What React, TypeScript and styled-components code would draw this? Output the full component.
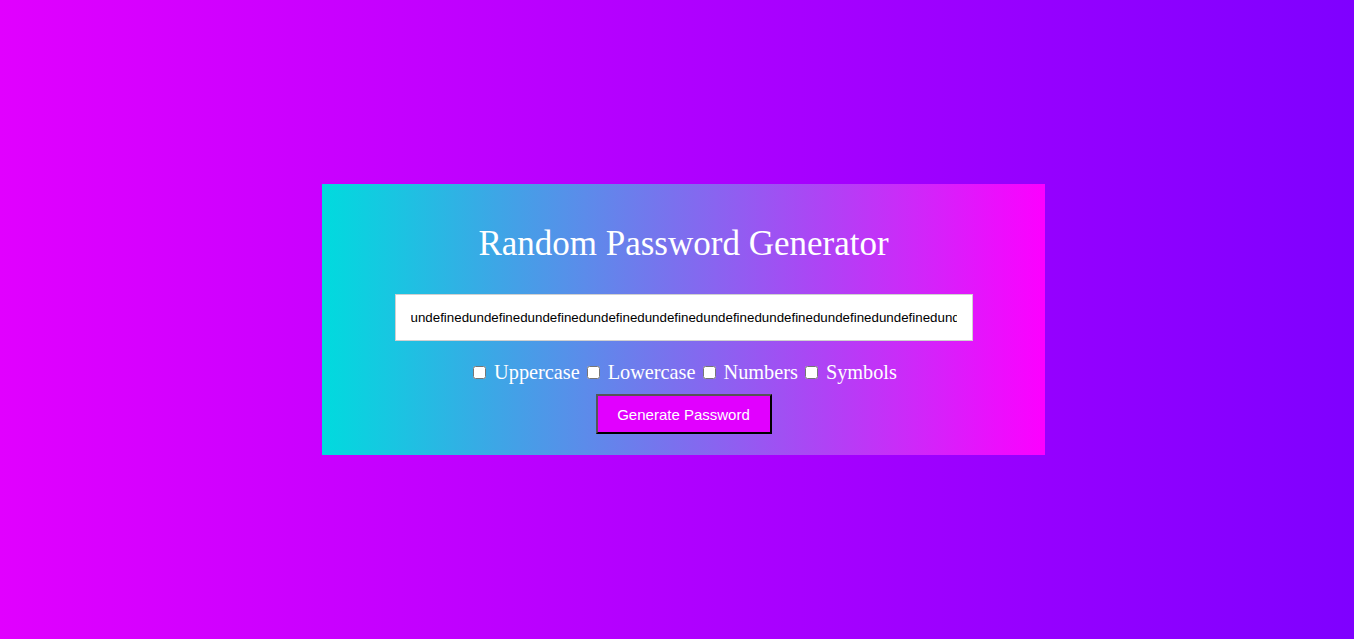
import React from "react";
import styled, { createGlobalStyle } from "styled-components";

const Global = createGlobalStyle`
  html, body { margin: 0; padding: 0; }
  body {
    font-family: "Liberation Serif", "Times New Roman", serif;
    background: linear-gradient(to right, #e100ff, #7f00ff);
    min-height: 100vh;
  }
`;

const Page = styled.div`
  min-height: 100vh;
  display: flex;
  align-items: center;
  justify-content: center;
  padding-left: 13px;
  box-sizing: border-box;
`;

const Card = styled.div`
  width: 723px;
  height: 271px;
  box-sizing: border-box;
  background: linear-gradient(to right, #00dbde, #fc00ff);
  display: flex;
  flex-direction: column;
  align-items: center;
  padding-top: 38px;
`;

const Title = styled.h1`
  margin: 0 0 28px 0;
  font-family: "Liberation Serif", "Times New Roman", serif;
  font-weight: normal;
  font-size: 35px;
  line-height: 44px;
  color: #fff;
`;

const PasswordInput = styled.input`
  width: 578px;
  height: 47px;
  box-sizing: border-box;
  border: 1px solid #d0d0d0;
  background: #fff;
  padding: 0 15px;
  font-family: "Liberation Sans", Arial, sans-serif;
  font-size: 13.333px;
  color: #000;
  outline: none;
`;

const Options = styled.div`
  display: flex;
  align-items: center;
  margin-top: 19px;
  height: 24px;
`;

const Option = styled.label`
  display: flex;
  align-items: center;
  color: #fff;
  font-family: "Liberation Serif", "Times New Roman", serif;
  font-size: 20.3px;
  margin-right: 4px;
  &:last-child { margin-right: 0; }
`;

const Check = styled.input`
  margin: 0 8px 0 3px;
  width: 13px;
  height: 13px;
`;

const Button = styled.button`
  margin-top: 10px;
  width: 176px;
  height: 40px;
  background: #e100ff;
  color: #fff;
  font-family: "Liberation Sans", Arial, sans-serif;
  font-size: 15px;
  border-width: 2px;
  border-style: solid;
  border-color: #555 #000 #000 #555;
  cursor: pointer;
`;

const options = ["Uppercase", "Lowercase", "Numbers", "Symbols"];

export default function App() {
  const value = "undefined".repeat(12);
  return (
    <>
      <Global />
      <Page>
        <Card>
          <Title>Random Password Generator</Title>
          <PasswordInput type="text" readOnly value={value} />
          <Options>
            {options.map((o) => (
              <Option key={o}>
                <Check type="checkbox" />
                {o}
              </Option>
            ))}
          </Options>
          <Button>Generate Password</Button>
        </Card>
      </Page>
    </>
  );
}
